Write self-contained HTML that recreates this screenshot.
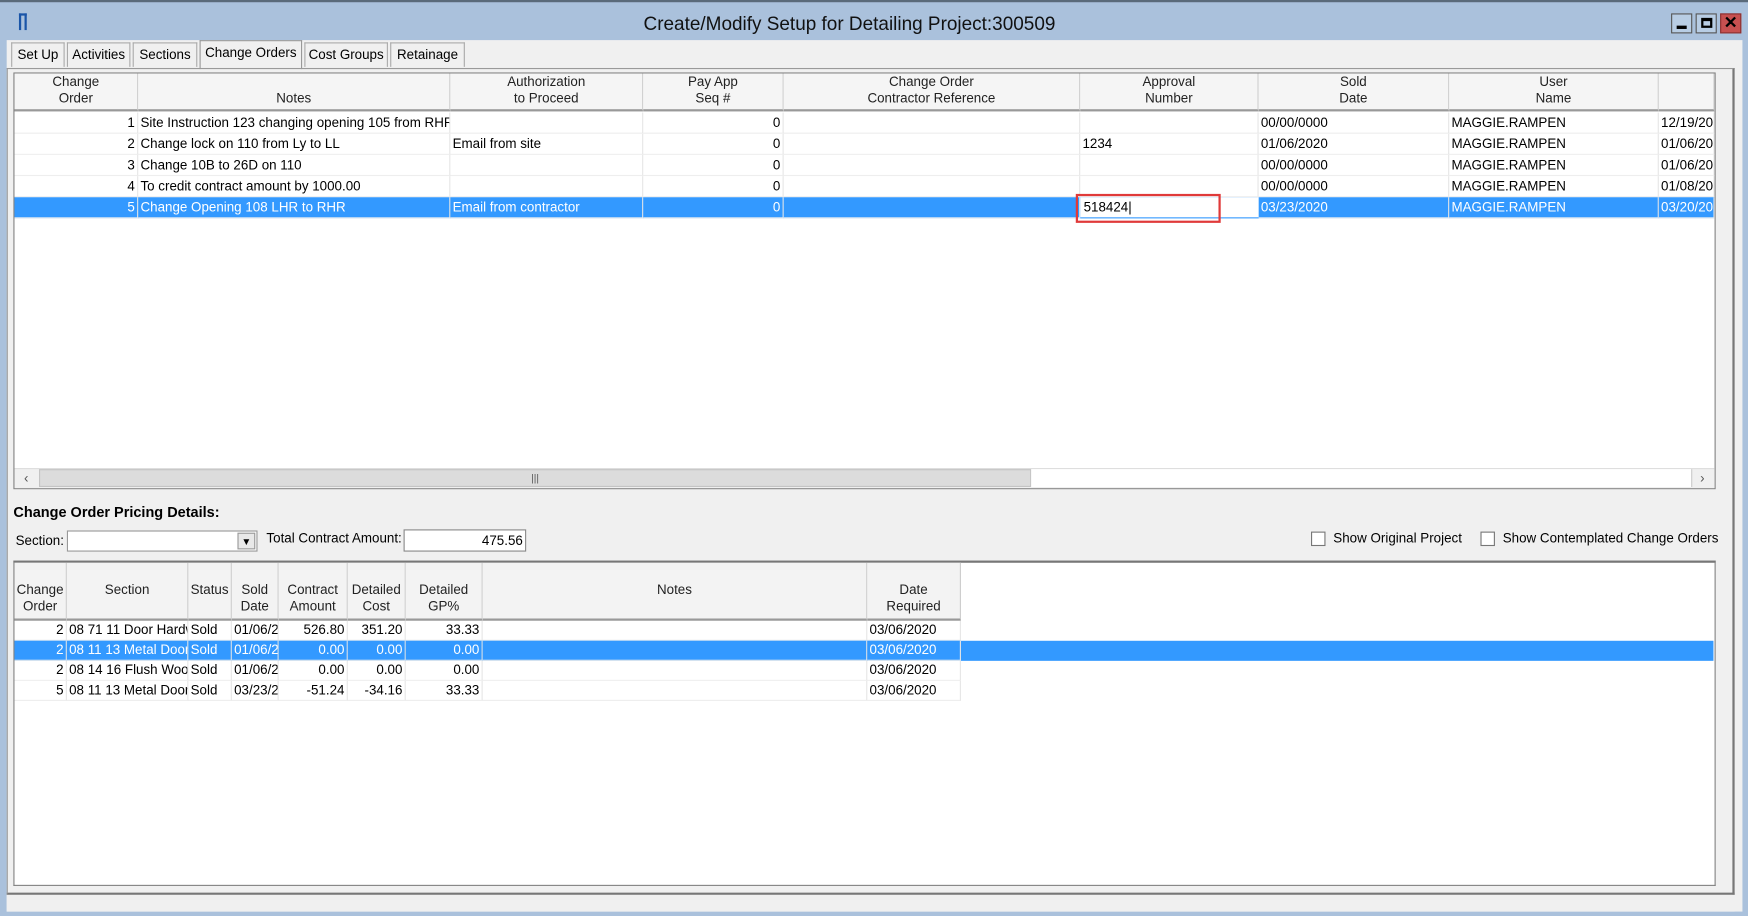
<!DOCTYPE html>
<html><head><meta charset="utf-8"><style>
*{box-sizing:border-box;margin:0;padding:0}
html,body{width:1748px;height:916px;overflow:hidden;background:#aac1dc}
#w{position:absolute;left:0;top:0;width:1568px;height:822px;transform:scale(1.1148,1.1144);transform-origin:0 0;font-family:"Liberation Sans",sans-serif;font-size:12px;color:#000}
.a{position:absolute}
.tb{left:0;top:0;width:1568px;height:36px;background:#aac1dc;border-top:2px solid #5a6a7a}
.body{left:6px;top:36px;width:1557px;height:782px;background:#f0f0f0}
.tab{position:absolute;top:38px;height:22px;border:1px solid #aaa;border-bottom:none;background:#f0f0f0;text-align:center;line-height:21px;font-size:12px}
.grid{background:#fff;border:1px solid #828282}
.hd{position:absolute;background:#f5f5f5;border-right:1px solid #ccc;border-bottom:2px solid #999;text-align:center;line-height:15px;font-size:12px;color:#222}
.c{position:absolute;white-space:nowrap;overflow:hidden;font-size:12px;line-height:18px;padding:0 2px;border-right:1px solid #e6e6e6;border-bottom:1px solid #eee}
.r{text-align:right}
.sel{background:#3399ff;color:#fff}
.btn{position:absolute;top:12px;width:19px;height:18px;border:1px solid #555;background:#b8cde4}
</style></head><body><div id="w">
<div class="a tb"></div>
<div class="a" style="left:17px;top:12px;width:7px;height:15px;border:2px solid #1a55a8;border-bottom:none"></div>
<div class="a" style="left:0;width:1524px;top:12px;text-align:center;font-size:17px;color:#111">Create/Modify Setup for Detailing Project:300509</div>
<div class="btn" style="left:1499px"><div class="a" style="left:4px;top:10px;width:9px;height:3px;background:#000"></div></div>
<div class="btn" style="left:1521px"><div class="a" style="left:4px;top:3px;width:10px;height:9px;border:2px solid #000;border-top-width:3px"></div></div>
<div class="btn" style="left:1543px;background:#c75050;border-color:#8a3030;color:#000;font-weight:bold;font-size:15px;text-align:center;line-height:16px">✕</div>
<div class="a body"></div>
<div class="tab" style="left:10px;width:48px">Set Up</div>
<div class="tab" style="left:60px;width:57px">Activities</div>
<div class="tab" style="left:119px;width:58px">Sections</div>
<div class="tab" style="left:179px;width:92px;top:36px;height:26px;background:#f0f0f0;border-color:#999">Change Orders</div>
<div class="tab" style="left:273px;width:75px">Cost Groups</div>
<div class="tab" style="left:350px;width:67px">Retainage</div>
<div class="a" style="left:6px;top:61px;width:1550px;height:742px;border:1px solid #999;border-right:2px solid #777;border-bottom:2px solid #777"></div>

<div class="a grid" style="left:12px;top:65px;width:1527px;height:374px"></div>
<div class="hd" style="left:13px;top:66px;width:111px;height:34px">Change<br>Order</div>
<div class="hd" style="left:124px;top:66px;width:280px;height:34px"><br>Notes</div>
<div class="hd" style="left:404px;top:66px;width:173px;height:34px">Authorization<br>to Proceed</div>
<div class="hd" style="left:577px;top:66px;width:126px;height:34px">Pay App<br>Seq #</div>
<div class="hd" style="left:703px;top:66px;width:266px;height:34px">Change Order<br>Contractor Reference</div>
<div class="hd" style="left:969px;top:66px;width:160px;height:34px">Approval<br>Number</div>
<div class="hd" style="left:1129px;top:66px;width:171px;height:34px">Sold<br>Date</div>
<div class="hd" style="left:1300px;top:66px;width:188px;height:34px">User<br>Name</div>
<div class="hd" style="left:1488px;top:66px;width:50px;height:34px"></div>

<div id="top"></div>
<div class="a" style="left:13px;top:420px;width:1525px;height:18px;background:#f0f0f0;border-top:1px solid #ddd"></div>
<div class="a" style="left:14px;top:421px;width:19px;height:16px;text-align:center;color:#555;line-height:16px">‹</div>
<div class="a" style="left:35px;top:421px;width:890px;height:16px;background:#dcdcdc;border:1px solid #c4c4c4;text-align:center;line-height:14px;font-size:9px;color:#555">|||</div>
<div class="a" style="left:925px;top:421px;width:592px;height:16px;background:#fff"></div>
<div class="a" style="left:1517px;top:421px;width:19px;height:16px;text-align:center;color:#555;line-height:16px;border-left:1px solid #ccc">›</div>
<div class="a" style="left:965px;top:174px;width:130px;height:26px;border:2px solid #e03a3a"></div>

<div class="a" style="left:12px;top:452px;font-weight:bold;font-size:13px">Change Order Pricing Details:</div>
<div class="a" style="left:14px;top:478px">Section:</div>
<div class="a" style="left:60px;top:476px;width:171px;height:19px;background:#fff;border:1px solid #999"></div>
<div class="a" style="left:213px;top:478px;width:16px;height:15px;background:#e8e8e8;border:1px solid #999;font-size:9px;text-align:center;line-height:14px">▼</div>
<div class="a" style="left:239px;top:476px">Total Contract Amount:</div>
<div class="a" style="left:362px;top:475px;width:110px;height:20px;background:#fff;border:1px solid #888;text-align:right;padding-right:2px;line-height:19px">475.56</div>
<div class="a" style="left:1176px;top:477px;width:13px;height:13px;border:1px solid #777;background:#fff"></div>
<div class="a" style="left:1196px;top:476px">Show Original Project</div>
<div class="a" style="left:1328px;top:477px;width:13px;height:13px;border:1px solid #777;background:#fff"></div>
<div class="a" style="left:1348px;top:476px">Show Contemplated Change Orders</div>

<div class="a grid" style="left:12px;top:503px;width:1527px;height:292px;border-top:2px solid #777"></div>
<div id="bot"></div>
<div class="a" style="left:6px;top:803px;width:1550px;height:15px;background:#f0f0f0"></div>
</div>
<script>
function cells(cont,cols,rows,top,h,sel,full){let s='';rows.forEach((r,i)=>{let y=top+i*h;let isSel=i===sel;
if(isSel&&full)s+=`<div class="a sel" style="left:${cols[0]}px;top:${y}px;width:${full-cols[0]}px;height:${h}px"></div>`;
r.forEach((t,j)=>{let al=t[1]?' r':'';let sc=isSel?' sel':'';s+=`<div class="c${al}${sc}" style="left:${cols[j]}px;top:${y}px;width:${cols[j+1]-cols[j]}px;height:${h}px;line-height:${h-1}px">${t[0]}</div>`});});document.getElementById(cont).innerHTML=s;}
var tc=[13,124,404,577,703,969,1129,1300,1488,1538];
var M='MAGGIE.RAMPEN';
cells('top',tc,[
[['1',1],['Site Instruction 123 changing opening 105 from RHR'],[''],['0',1],[''],[''],['00/00/0000'],[M],['12/19/20']],
[['2',1],['Change lock on 110 from Ly to LL'],['Email from site'],['0',1],[''],['1234'],['01/06/2020'],[M],['01/06/20']],
[['3',1],['Change 10B to 26D on 110'],[''],['0',1],[''],[''],['00/00/0000'],[M],['01/06/20']],
[['4',1],['To credit contract amount by 1000.00'],[''],['0',1],[''],[''],['00/00/0000'],[M],['01/08/20']],
[['5',1],['Change Opening 108 LHR to RHR'],['Email from contractor'],['0',1],[''],['518424|'],['03/23/2020'],[M],['03/20/20']]
],101,19,4,0);
var bc=[13,60,169,208,250,312,364,433,778,862];
var h='';[['Change<br>Order',0],['Section<br>&nbsp;',1],['Status<br>&nbsp;',2],['Sold<br>Date',3],['Contract<br>Amount',4],['Detailed<br>Cost',5],['Detailed<br>GP%',6],['Notes<br>&nbsp;',7],['Date<br>Required',8]].forEach(x=>{h+=`<div class="hd" style="left:${bc[x[1]]}px;top:505px;width:${bc[x[1]+1]-bc[x[1]]}px;height:52px;padding-top:17px;background:#f3f3f3">${x[0]}</div>`});
cells('bot',bc,[
[['2',1],['08 71 11 Door Hardware'],['Sold'],['01/06/2020'],['526.80',1],['351.20',1],['33.33',1],[''],['03/06/2020']],
[['2',1],['08 11 13 Metal Doors'],['Sold'],['01/06/2020'],['0.00',1],['0.00',1],['0.00',1],[''],['03/06/2020']],
[['2',1],['08 14 16 Flush Wood'],['Sold'],['01/06/2020'],['0.00',1],['0.00',1],['0.00',1],[''],['03/06/2020']],
[['5',1],['08 11 13 Metal Doors'],['Sold'],['03/23/2020'],['-51.24',1],['-34.16',1],['33.33',1],[''],['03/06/2020']]
],557,18,1,1537);
document.getElementById('bot').insertAdjacentHTML('afterbegin',h);
document.getElementById('top').insertAdjacentHTML('beforeend','<div class="a" style="left:969px;top:177px;width:160px;height:19px;background:#fff;border-bottom:1px solid #3399ff;padding-left:3px;line-height:18px">518424|</div>');
</script>
</body></html>
